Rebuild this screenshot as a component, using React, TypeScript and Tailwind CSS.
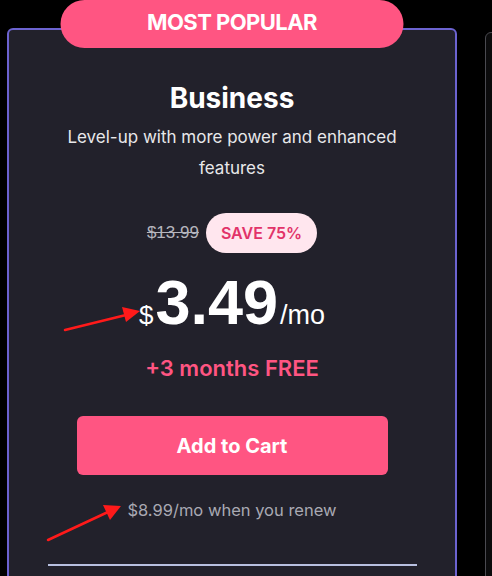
export default function App() {
  return (
    <div className="relative h-[576px] w-[492px] overflow-hidden bg-black font-['Inter',sans-serif]">
      <div className="flex items-start gap-[28px] pl-[7px] pt-[28px]">
        {/* Highlighted plan */}
        <div className="relative flex h-[600px] w-[450px] shrink-0 flex-col items-center rounded-md border-2 border-[#6c63d0] bg-[#22212b]">
          <div className="absolute -top-[30px] left-1/2 flex h-[48px] w-[343px] -translate-x-1/2 items-center justify-center rounded-full bg-[#ff5582] pb-[3px]">
            <span className="text-[22px] font-bold tracking-tight text-white">MOST POPULAR</span>
          </div>

          <h2 className="mt-[52px] text-[28px] font-bold leading-[32px] text-white">Business</h2>
          <p className="mt-[8px] max-w-[350px] text-center text-[17px] leading-[31px] text-[#e8e8ea]">
            Level-up with more power and enhanced features
          </p>

          <div className="mt-[29px] flex items-center gap-[7px]">
            <span className="font-['Liberation_Sans',sans-serif] text-[17px] text-[#b5b5bd] line-through">$13.99</span>
            <span className="flex h-[40px] items-center rounded-full bg-[#ffe6ee] px-[15px] text-[16px] font-semibold text-[#e23369]">
              SAVE 75%
            </span>
          </div>

          <div className="mt-[18px] flex items-baseline font-['Liberation_Sans',sans-serif] leading-none text-white">
            <span className="text-[26px]">$</span>
            <span className="ml-[2px] text-[63px] font-bold">3.49</span>
            <span className="ml-[2px] text-[27px]">/mo</span>
          </div>

          <p className="mt-[20px] text-[22px] font-semibold leading-[28px] text-[#ff5582]">+3 months FREE</p>

          <button className="mt-[34px] flex h-[59px] w-[311px] items-center justify-center rounded-md bg-[#ff5582] text-[20px] font-bold text-white">
            Add to Cart
          </button>

          <p className="mt-[23px] text-[16.5px] leading-[24px] text-[#a9a9b3]">
            $8.99/mo when you renew
          </p>

          <div className="mt-[42px] h-[2px] w-[369px] bg-[#b8c0e0]" />
        </div>

        {/* Next plan, cut off */}
        <div className="mt-[4px] h-[600px] w-[200px] shrink-0 rounded-md border border-[#4a4a50] bg-[#0b0b0c]" />
      </div>

      {/* annotation arrows */}
      <svg className="pointer-events-none absolute left-0 top-0" width="492" height="576">
        <line x1="65" y1="330" x2="126" y2="315" stroke="#ff1a1a" strokeWidth="2.5" strokeLinecap="round" />
        <polygon points="140,311 122,307 126,322" fill="#ff1a1a" />
        <line x1="48" y1="540" x2="108" y2="512" stroke="#ff1a1a" strokeWidth="2.5" strokeLinecap="round" />
        <polygon points="121,506 103,505 110,520" fill="#ff1a1a" />
      </svg>
    </div>
  )
}
